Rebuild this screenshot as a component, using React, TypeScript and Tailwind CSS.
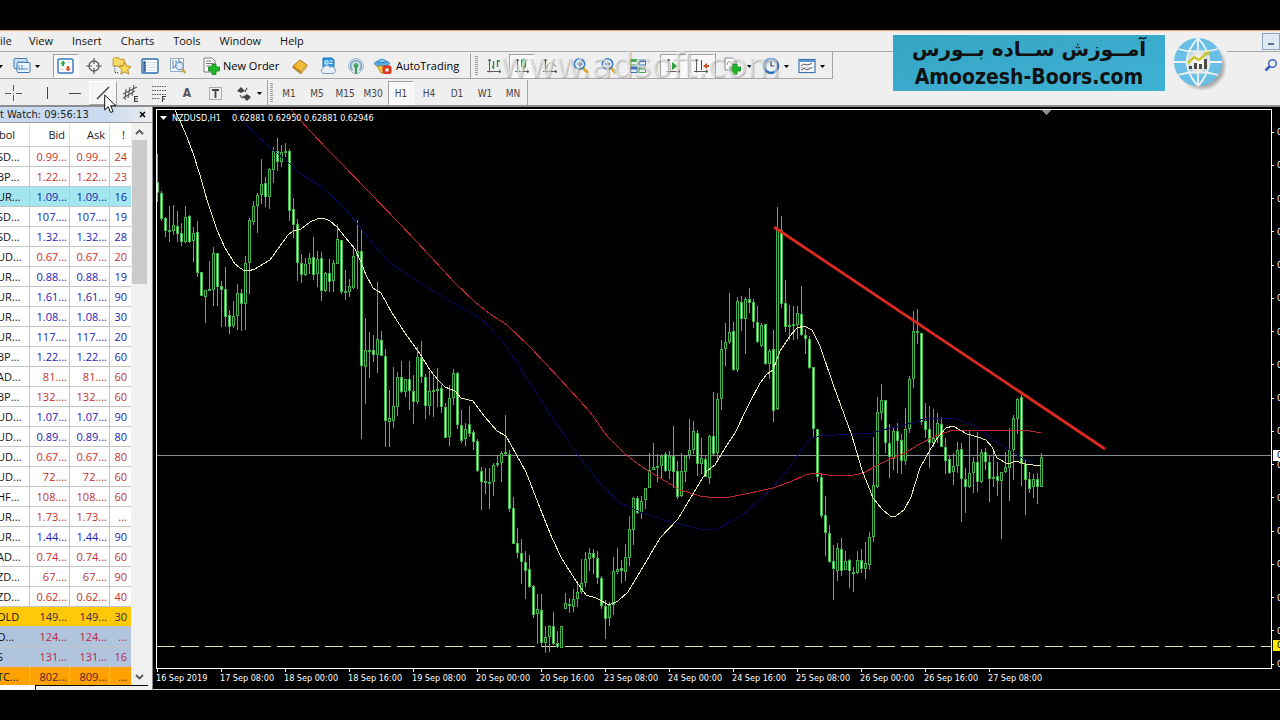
import type { ReactNode } from "react"
import clsx from "clsx"

/* ---------- Data ---------- */

type Tone = "up" | "down"
type Quote = { symbol: string; bid: string; ask: string; spread: string; tone: Tone; row?: string; text?: string }

const QUOTES: Quote[] = [
    { symbol: "SD...", bid: "0.99...", ask: "0.99...", spread: "24", tone: "down" },
    { symbol: "BP...", bid: "1.22...", ask: "1.22...", spread: "23", tone: "down" },
    { symbol: "UR...", bid: "1.09...", ask: "1.09...", spread: "16", tone: "up", row: "bg-[#a2e6f0]" },
    { symbol: "SD...", bid: "107....", ask: "107....", spread: "19", tone: "up" },
    { symbol: "SD...", bid: "1.32...", ask: "1.32...", spread: "28", tone: "up" },
    { symbol: "UD...", bid: "0.67...", ask: "0.67...", spread: "20", tone: "down" },
    { symbol: "UR...", bid: "0.88...", ask: "0.88...", spread: "19", tone: "up" },
    { symbol: "UR...", bid: "1.61...", ask: "1.61...", spread: "90", tone: "up" },
    { symbol: "UR...", bid: "1.08...", ask: "1.08...", spread: "30", tone: "up" },
    { symbol: "UR...", bid: "117....", ask: "117....", spread: "20", tone: "up" },
    { symbol: "BP...", bid: "1.22...", ask: "1.22...", spread: "60", tone: "up" },
    { symbol: "AD...", bid: "81....", ask: "81....", spread: "60", tone: "down" },
    { symbol: "BP...", bid: "132....", ask: "132....", spread: "60", tone: "down" },
    { symbol: "UD...", bid: "1.07...", ask: "1.07...", spread: "90", tone: "up" },
    { symbol: "UD...", bid: "0.89...", ask: "0.89...", spread: "80", tone: "up" },
    { symbol: "UD...", bid: "0.67...", ask: "0.67...", spread: "80", tone: "down" },
    { symbol: "UD...", bid: "72....", ask: "72....", spread: "60", tone: "down" },
    { symbol: "HF...", bid: "108....", ask: "108....", spread: "60", tone: "down" },
    { symbol: "UR...", bid: "1.73...", ask: "1.73...", spread: "...", tone: "down" },
    { symbol: "UR...", bid: "1.44...", ask: "1.44...", spread: "90", tone: "up" },
    { symbol: "AD...", bid: "0.74...", ask: "0.74...", spread: "60", tone: "down" },
    { symbol: "ZD...", bid: "67....", ask: "67....", spread: "90", tone: "down" },
    { symbol: "ZD...", bid: "0.62...", ask: "0.62...", spread: "40", tone: "down" },
    { symbol: "OLD", bid: "149...", ask: "149...", spread: "30", tone: "up", row: "bg-[#ffc90a]", text: "text-[#3a2848]" },
    { symbol: "O...", bid: "124...", ask: "124...", spread: "...", tone: "down", row: "bg-[#b0c4de]", text: "text-[#bb2447]" },
    { symbol: "S", bid: "131...", ask: "131...", spread: "16", tone: "down", row: "bg-[#b0c4de]", text: "text-[#bb2447]" },
    { symbol: "TC...", bid: "802...", ask: "809...", spread: "...", tone: "down", row: "bg-[#ffa200]", text: "text-[#5a2030]" },
]

// [high, body top, body bottom, low, falling]
type Candle = [number, number, number, number, 0 | 1]

const CANDLES: Candle[] = [
    [154, 182, 193, 202, 1], [191, 193, 219, 221, 1], [217, 218, 231, 237, 1], [206, 230, 232, 242, 0],
    [205, 225, 231, 235, 0], [211, 226, 234, 242, 1], [223, 233, 242, 246, 1], [206, 217, 242, 243, 0],
    [215, 216, 242, 243, 1], [227, 233, 241, 262, 0], [221, 232, 273, 277, 1], [272, 272, 296, 296, 1],
    [290, 290, 297, 323, 0], [261, 289, 291, 291, 0], [247, 253, 290, 306, 0], [253, 253, 287, 306, 1],
    [281, 286, 290, 327, 1], [267, 289, 317, 327, 1], [310, 315, 327, 334, 1], [301, 316, 326, 328, 0],
    [284, 293, 316, 330, 0], [289, 293, 304, 331, 1], [256, 263, 304, 330, 0], [218, 220, 263, 294, 0],
    [201, 206, 222, 225, 0], [193, 195, 206, 233, 0], [159, 184, 195, 204, 0], [177, 183, 197, 207, 1],
    [168, 169, 197, 209, 0], [147, 151, 170, 183, 0], [138, 151, 162, 171, 1], [145, 152, 162, 167, 0],
    [143, 151, 153, 157, 1], [149, 151, 211, 221, 1], [198, 209, 225, 238, 1], [219, 224, 263, 281, 1],
    [254, 263, 275, 283, 1], [258, 264, 275, 276, 0], [253, 258, 264, 274, 0], [237, 257, 275, 280, 1],
    [251, 259, 274, 287, 0], [252, 258, 291, 301, 1], [272, 273, 291, 292, 0], [259, 273, 282, 292, 1],
    [260, 263, 281, 292, 0], [224, 239, 264, 264, 0], [240, 240, 292, 294, 1], [270, 291, 293, 300, 0],
    [279, 286, 292, 297, 0], [246, 256, 288, 289, 0], [220, 251, 256, 289, 0], [230, 251, 366, 439, 1],
    [318, 350, 367, 404, 0], [332, 350, 352, 378, 0], [335, 350, 355, 362, 1], [282, 339, 355, 373, 0],
    [331, 340, 356, 356, 1], [349, 356, 421, 447, 1], [390, 418, 422, 447, 0], [367, 406, 421, 428, 0],
    [372, 377, 407, 416, 0], [361, 377, 392, 393, 1], [379, 379, 392, 397, 0], [361, 379, 391, 410, 1],
    [375, 391, 402, 424, 1], [347, 357, 402, 404, 0], [341, 357, 377, 383, 1], [374, 377, 406, 419, 1],
    [371, 391, 406, 415, 0], [374, 390, 392, 417, 0], [368, 389, 391, 407, 0], [385, 388, 407, 413, 1],
    [403, 407, 438, 438, 1], [385, 398, 437, 446, 0], [369, 373, 398, 405, 0], [372, 373, 425, 429, 1],
    [410, 425, 441, 443, 1], [423, 429, 439, 446, 0], [406, 424, 434, 437, 1], [430, 432, 442, 450, 1],
    [439, 441, 471, 472, 1], [467, 471, 482, 510, 1], [468, 481, 483, 494, 1], [468, 482, 484, 509, 0],
    [463, 465, 482, 496, 0], [455, 463, 465, 467, 0], [451, 453, 463, 482, 0], [415, 452, 454, 455, 1],
    [450, 454, 509, 512, 1], [497, 508, 544, 544, 1], [528, 543, 553, 558, 1], [539, 553, 562, 584, 1],
    [551, 562, 571, 599, 1], [555, 569, 587, 588, 1], [585, 586, 615, 618, 1], [594, 609, 614, 644, 0],
    [594, 610, 643, 647, 1], [626, 637, 643, 653, 0], [625, 626, 637, 652, 0], [612, 626, 644, 645, 1],
    [631, 643, 647, 648, 1], [626, 626, 648, 648, 0], [593, 603, 609, 609, 0], [598, 604, 606, 613, 1],
    [589, 599, 607, 612, 0], [581, 592, 599, 607, 0], [559, 583, 592, 594, 0], [552, 559, 583, 587, 0],
    [548, 553, 559, 571, 0], [549, 553, 558, 574, 1], [551, 558, 578, 584, 1], [576, 578, 606, 609, 1],
    [600, 606, 619, 639, 1], [602, 605, 618, 626, 0], [557, 571, 605, 615, 0], [548, 569, 572, 574, 0],
    [560, 568, 571, 583, 1], [544, 557, 572, 581, 0], [516, 529, 558, 566, 0], [497, 498, 530, 545, 0],
    [496, 498, 513, 514, 1], [496, 501, 513, 519, 0], [488, 488, 500, 509, 0], [453, 470, 488, 488, 0],
    [443, 467, 470, 470, 0], [454, 466, 468, 482, 0], [454, 456, 466, 479, 0], [452, 454, 471, 472, 1],
    [451, 456, 471, 479, 0], [426, 456, 472, 488, 1], [461, 471, 497, 499, 1], [453, 471, 496, 497, 0],
    [456, 456, 472, 482, 0], [419, 450, 455, 459, 0], [421, 431, 450, 454, 0], [430, 433, 464, 476, 1],
    [438, 458, 464, 474, 0], [455, 459, 477, 477, 1], [435, 436, 478, 484, 0], [392, 436, 454, 456, 1],
    [393, 399, 453, 460, 0], [340, 349, 399, 410, 0], [323, 342, 349, 366, 0], [293, 332, 342, 344, 0],
    [322, 331, 370, 371, 1], [297, 301, 370, 372, 0], [296, 302, 319, 331, 1], [297, 299, 319, 354, 0],
    [288, 299, 303, 313, 1], [299, 302, 322, 328, 1], [306, 322, 342, 343, 1], [323, 325, 346, 347, 0],
    [324, 324, 364, 365, 1], [349, 351, 364, 379, 0], [330, 349, 411, 422, 1], [207, 230, 409, 410, 0],
    [216, 230, 304, 308, 1], [280, 303, 327, 332, 1], [305, 325, 327, 340, 1], [306, 324, 326, 340, 0],
    [306, 313, 325, 339, 0], [286, 314, 335, 336, 1], [329, 335, 339, 354, 1], [336, 339, 368, 369, 1],
    [367, 367, 429, 438, 1], [429, 429, 477, 482, 1], [474, 477, 516, 518, 1], [496, 515, 533, 556, 1],
    [525, 533, 562, 563, 1], [545, 561, 569, 600, 1], [543, 548, 571, 581, 0], [538, 549, 571, 576, 1],
    [551, 561, 570, 570, 0], [559, 560, 571, 588, 1], [567, 572, 574, 592, 0], [551, 560, 573, 574, 0],
    [549, 560, 569, 573, 1], [542, 563, 569, 579, 0], [532, 537, 565, 570, 0], [437, 485, 537, 542, 0],
    [397, 412, 487, 488, 0], [384, 400, 413, 420, 0], [400, 400, 443, 453, 1], [424, 443, 457, 478, 1],
    [428, 431, 459, 470, 0], [423, 431, 441, 473, 1], [434, 440, 461, 474, 1], [408, 429, 461, 465, 0],
    [376, 379, 429, 433, 0], [311, 331, 379, 388, 0], [309, 331, 333, 344, 1], [333, 333, 422, 425, 1],
    [403, 421, 430, 438, 1], [406, 429, 443, 468, 1], [409, 438, 443, 447, 0], [413, 423, 438, 443, 0],
    [417, 424, 447, 447, 1], [438, 447, 461, 474, 1], [456, 459, 473, 474, 1], [453, 466, 472, 485, 0],
    [442, 450, 466, 473, 0], [443, 449, 479, 522, 1], [468, 479, 487, 513, 1], [431, 473, 487, 488, 0],
    [457, 462, 473, 493, 0], [432, 462, 482, 492, 1], [449, 452, 482, 483, 0], [448, 452, 462, 470, 1],
    [456, 462, 479, 502, 1], [452, 477, 479, 487, 0], [462, 476, 481, 496, 1], [472, 472, 481, 539, 0],
    [452, 467, 472, 473, 0], [428, 450, 468, 501, 0], [415, 418, 450, 480, 0], [398, 399, 419, 434, 0],
    [391, 397, 464, 486, 1], [460, 464, 480, 515, 1], [472, 479, 489, 493, 1], [474, 479, 487, 498, 0],
    [473, 479, 487, 504, 1], [453, 457, 487, 487, 0],
]

const MA_FAST =
    "175,110 185,132 193,153 200,175 207,200 217,230 225,248 235,264 243,270 248,271 255,269 263,264 270,260 280,246 288,235 293,231 301,229 310,222 317,219 323,218 330,221 337,227 345,237 355,249 361,262 366,275 373,288 381,293 392,313 405,333 420,354 430,370 438,380 445,387 455,391 461,398 473,401 485,417 497,431 506,436 516,454 526,472 540,508 552,538 562,559 576,581 586,595 596,598 609,605 618,601 628,592 640,572 660,538 678,519 690,499 700,482 707,471 715,465 725,448 735,433 748,406 760,383 767,374 773,370 780,351 790,336 797,328 804,326 812,330 820,346 833,384 852,436 862,470 873,498 882,509 890,516 896,516 904,510 911,497 920,468 930,450 938,437 946,428 953,426 960,430 967,434 978,437 986,440 992,447 997,458 1008,464 1016,461 1025,464 1041,466"
const MA_SLOW =
    "291,110 310,131 328,150 340,162 368,191 400,224 430,256 455,283 475,302 490,314 507,325 530,347 560,379 590,412 607,436 625,454 645,469 665,481 680,490 700,496 715,498 730,497 750,493 773,488 790,482 805,475 815,473 828,475 850,476 863,473 878,465 890,459 905,453 918,445 935,436 950,431 965,430 1025,430 1041,433"
const MA_MID =
    "235,110 242,120 258,137 272,149 288,162 298,172 322,187 345,209 357,223 368,238 388,261 415,280 450,301 480,318 490,327 507,347 523,372 547,410 577,454 603,487 620,503 640,512 667,521 700,529 715,530 740,517 757,502 773,487 787,470 800,452 810,439 820,436 853,434 873,433 890,428 913,423 923,419 953,418 967,423 980,428 993,440 1010,450 1020,457 1033,463"

const TIMES = [
    "16 Sep 2019", "17 Sep 08:00", "18 Sep 00:00", "18 Sep 16:00", "19 Sep 08:00", "20 Sep 00:00", "20 Sep 16:00",
    "23 Sep 08:00", "24 Sep 00:00", "24 Sep 16:00", "25 Sep 08:00", "26 Sep 00:00", "26 Sep 16:00", "27 Sep 08:00",
]

const MENU = ["View", "Insert", "Charts", "Tools", "Window", "Help"]
const FRAMES = ["M1", "M5", "M15", "M30", "H1", "H4", "D1", "W1", "MN"]

const UI = "font-['Open_Sans','Noto_Sans',sans-serif]"
const TAHOMA = "font-['DejaVu_Sans_Condensed','DejaVu_Sans',sans-serif]"

/* ---------- Toolbar parts ---------- */

function Glyph({ children, size = 18 }: { children: ReactNode; size?: number }) {
    return (
        <svg width={size} height={size} viewBox="0 0 18 18" fill="none" className="shrink-0" aria-hidden="true">
            {children}
        </svg>
    )
}

function Tool({ label, width = "w-7", pressed, children }: { label: string; width?: string; pressed?: boolean; children: ReactNode }) {
    return (
        <button type="button" aria-label={label} className={clsx("flex h-6 shrink-0 items-center justify-center", width)}>
            {pressed ? (
                <span className="flex h-6 w-[26px] items-center justify-center border border-r-white border-b-white border-t-[#a0a0a0] border-l-[#a0a0a0] bg-[#f8f8f8]">
                    {children}
                </span>
            ) : (
                children
            )}
        </button>
    )
}

function Separator() {
    return <span className="h-[26px] w-px shrink-0 bg-[#a4a4a4]" />
}

function Grip() {
    return (
        <svg width="3" height="20" className="shrink-0" aria-hidden="true">
            {Array.from({ length: 10 }, (_, i) => (
                <rect key={i} y={i * 2} width="3" height="1" fill="#9a9a9a" />
            ))}
        </svg>
    )
}

function Caret() {
    return (
        <svg width="5" height="3" viewBox="0 0 5 3" className="shrink-0" aria-hidden="true">
            <path d="M0 0h5L2.5 3z" fill="#000" />
        </svg>
    )
}

function Crosshair() {
    return (
        <Glyph>
            <circle cx="9" cy="9" r="5" stroke="#606060" strokeWidth="1.4" />
            <path d="M9 1v6M9 11v6M1 9h6M11 9h6" stroke="#606060" strokeWidth="1.2" />
        </Glyph>
    )
}

function Magnifier({ minus }: { minus?: boolean }) {
    return (
        <Glyph>
            <path d="M11 11l5 5" stroke="#d8a92c" strokeWidth="3" />
            <circle cx="7.5" cy="7" r="5.2" fill="#dceefb" stroke="#3a7cc4" strokeWidth="1.6" />
            <path d={minus ? "M5 7h5" : "M5 7h5M7.5 4.5v5"} stroke="#2d6ab4" strokeWidth="1.5" />
        </Glyph>
    )
}

function Axes({ children }: { children: ReactNode }) {
    return (
        <Glyph>
            <path d="M4.5 2v13.5M2 14.5h14M3 4l1.5-2L6 4M14 13l2 1.5-2 1.5" stroke="#5a5a5a" />
            {children}
        </Glyph>
    )
}

function MainToolbar() {
    return (
        <div className="flex h-[27px] w-[833px] items-center overflow-hidden border-r border-b border-[#a4a4a4] pt-0.5">
            <span className="flex w-[5px] justify-end"><span className="mr-0.5"><Caret /></span></span>
            <Tool label="New chart" width="w-[43px]">
                <span className="flex items-center gap-1">
                    <Glyph>
                        <rect x="1" y="1.5" width="13" height="10" rx="1" fill="#cfe3f6" stroke="#3c78b4" />
                        <rect x="4" y="5.5" width="13" height="10" rx="1" fill="#eaf4fd" stroke="#3c78b4" />
                        <path d="M4 5h8M6 8v5M6 12h9M9 8v5" stroke="#5b93c8" />
                    </Glyph>
                    <Caret />
                </span>
            </Tool>
            <span className="pl-0.5"><Separator /></span>
            <span className="w-0.5 shrink-0" />
            <Tool label="Market Watch" pressed>
                <Glyph>
                    <rect x="1" y="2" width="15" height="14" rx="1" fill="#fff" stroke="#3578bd" strokeWidth="1.4" />
                    <path d="M6 3.500l2.800 3H7.200v2.500H4.800V6.500H3.200z" fill="#2fa84a" />
                    <path d="M11 14.500l-2.800-3h1.600V9h2.400v2.500h1.600z" fill="#e0562c" />
                    <path d="M10.500 5.500h3M3.500 12.500h3" stroke="#b9cfe4" />
                </Glyph>
            </Tool>
            <Tool label="Crosshair"><Crosshair /></Tool>
            <Tool label="Navigator">
                <Glyph size={20}>
                    <path d="M1 2.500l1-1h4l1 1.500h4v6H1z" fill="#f8d867" stroke="#b88c22" strokeWidth=".8" />
                    <path d="M2.500 9v6M2.500 15h4" stroke="#444" strokeDasharray="1 1" />
                    <path d="M11.500 5.500l1.700 3.600 3.900.5-2.900 2.700.8 4-3.500-2-3.500 2 .8-4L6 9.600l3.900-.5z" fill="#fbdc55" stroke="#ae8420" strokeWidth=".8" />
                </Glyph>
            </Tool>
            <Tool label="Terminal">
                <Glyph>
                    <rect x="1" y="2" width="16" height="14" rx="1" fill="#fff" stroke="#2e6db1" strokeWidth="1.4" />
                    <path d="M2 4h3v11H2z" fill="#5490cc" />
                    <path d="M6 5.500h10M6 8h10M6 10.500h10M6 13h10" stroke="#c3d6ea" strokeWidth=".8" />
                    <path d="M3 6h1M3 8.500h1M3 11h1M3 13h1" stroke="#0e2f5a" />
                </Glyph>
            </Tool>
            <Tool label="Strategy Tester">
                <Glyph>
                    <path d="M1.500 1.500h13v13h-13z" fill="#fff" stroke="#8eabc8" />
                    <path d="M4 3v9M7 3v7M4 10h3M10 2v5M12 4v4" stroke="#4f7fb0" />
                    <circle cx="10.500" cy="9" r="3.800" fill="#d6e8f7" fillOpacity=".85" stroke="#6592c4" strokeWidth="1.200" />
                    <path d="M13 12l3.500 4" stroke="#d8a437" strokeWidth="2.400" />
                </Glyph>
            </Tool>
            <span className="pl-0.5"><Separator /></span>
            <button type="button" className="flex h-6 w-[92px] shrink-0 items-center gap-[3px] pl-2 text-[11px] text-black">
                <Glyph>
                    <path d="M2 1h8l3 3v11H2z" fill="#fff" stroke="#777" />
                    <path d="M4 4h5M4 6.500h7M4 9h5" stroke="#777" />
                    <path d="M10 7h4v3h3.500v4H14v3.500h-4V14H6.500v-4H10z" fill="#20b52a" stroke="#0c7d18" strokeWidth=".8" />
                </Glyph>
                <span className="whitespace-nowrap">New Order</span>
            </button>
            <Tool label="MetaEditor">
                <Glyph>
                    <path d="M2 9l7-6 7 5-6 7z" fill="#f2bc38" stroke="#a97816" />
                    <path d="M2 9v2l8 6v-2z" fill="#c98f1b" stroke="#a97816" strokeWidth=".6" />
                    <path d="M16 8v2l-6 7v-2z" fill="#fbe5a0" stroke="#a97816" strokeWidth=".6" />
                </Glyph>
            </Tool>
            <Tool label="Cloud">
                <Glyph>
                    <path d="M4 1h9l2 2v7H4z" fill="#2d9be6" stroke="#1b6fb4" />
                    <path d="M6 4h3v3H6zM10.500 4h3M10.500 6.500h3" stroke="#fff" />
                    <path d="M4 16.500a3 3 0 0 1 0-5.500 4 4 0 0 1 7-1 3.500 3.500 0 0 1 3.500 6.500z" fill="#e6edf8" stroke="#7f96bd" />
                </Glyph>
            </Tool>
            <Tool label="Signals">
                <Glyph>
                    <circle cx="9" cy="9" r="7.500" fill="#d5e4e8" stroke="#9fb8c8" />
                    <path d="M5.500 13a5.300 5.300 0 1 1 7 0" stroke="#6694b4" strokeWidth="1.300" />
                    <circle cx="9" cy="8.500" r="2.500" fill="#52a866" />
                    <path d="M9 9v8" stroke="#3c9a50" strokeWidth="2" />
                </Glyph>
            </Tool>
            <button type="button" className="flex h-6 w-[100px] shrink-0 items-center gap-1 pl-1 text-[11px] text-black">
                <Glyph>
                    <ellipse cx="8" cy="6.500" rx="7.500" ry="3" fill="#55aee6" stroke="#2a74aa" strokeWidth=".8" />
                    <path d="M4 5.500C4 1 12 1 12 5.500z" fill="#7cc6f2" stroke="#2a74aa" strokeWidth=".8" />
                    <path d="M3 9h10l-3 7H7z" fill="#f1c34b" stroke="#a9801e" strokeWidth=".8" />
                    <rect x="8.500" y="8.500" width="9" height="8.500" rx="2" fill="#d63b20" />
                    <rect x="11.500" y="11.500" width="3" height="3" fill="#fff" />
                </Glyph>
                <span className="whitespace-nowrap">AutoTrading</span>
            </button>
            <Separator />
            <span className="w-1 shrink-0" />
            <Grip />
            <span className="w-0.5 shrink-0" />
            <Tool label="Bar chart"><Axes><path d="M8.500 4v8M7 10h2M12.500 3v7M12 4h3" stroke="#2a8a3a" strokeWidth="1.300" /></Axes></Tool>
            <Tool label="Candlesticks" pressed>
                <Axes>
                    <path d="M10.500 1v12" stroke="#2a8a3a" />
                    <rect x="8.500" y="3" width="4" height="7" fill="#6ed07c" stroke="#2a8a3a" />
                </Axes>
            </Tool>
            <Tool label="Line chart"><Axes><path d="M5 12c3-8 6-8 10-2" stroke="#6a9a72" /></Axes></Tool>
            <span className="pl-[3px]"><Separator /></span>
            <Tool label="Zoom in"><Magnifier /></Tool>
            <Tool label="Zoom out"><Magnifier minus /></Tool>
            <Tool label="Tile windows" width="w-[30px]">
                <Glyph>
                    <rect x="1" y="2" width="7.500" height="6.500" fill="#4aa84e" />
                    <rect x="9.500" y="2" width="7.500" height="6.500" fill="#3b6fc0" />
                    <rect x="1" y="9.500" width="7.500" height="6.500" fill="#3b6fc0" />
                    <rect x="9.500" y="9.500" width="7.500" height="6.500" fill="#4aa84e" />
                    <path d="M2 5h5.500v2.500H2zM10.500 5H16v2.500h-5.500zM2 12.500h5.500V15H2zM10.500 12.500H16V15h-5.500z" fill="#e8f1f8" />
                </Glyph>
            </Tool>
            <span className="pl-[3px]"><Separator /></span>
            <span className="w-[3px] shrink-0" />
            <Tool label="Auto scroll" pressed><Axes><path d="M8 5l6 4-6 4z" fill="#36a344" /></Axes></Tool>
            <Tool label="Chart shift" pressed><Axes><path d="M9.500 3v10" stroke="#446" /><path d="M11 9l4-3v2h2v2h-2v2z" fill="#c8502c" /></Axes></Tool>
            <Separator />
            <Tool label="Indicators" width="w-[43px]">
                <span className="flex items-center gap-1.5">
                    <Glyph>
                        <path d="M2 1h8l3 3v9H2z" fill="#fff" stroke="#888" />
                        <path d="M4 8c1-5 3-4 4-1" stroke="#777" />
                        <path d="M10 7h4v3h3.500v4H14v3.500h-4V14H6.500v-4H10z" fill="#20b52a" stroke="#0c7d18" strokeWidth=".8" />
                    </Glyph>
                    <Caret />
                </span>
            </Tool>
            <Tool label="Periods" width="w-[33px]">
                <span className="flex items-center gap-1">
                    <Glyph>
                        <circle cx="9" cy="9" r="7" fill="#e8f2fb" stroke="#2d6cb5" strokeWidth="2.600" />
                        <path d="M9 4.500V9h3.500" stroke="#444" strokeWidth="1.200" />
                    </Glyph>
                    <Caret />
                </span>
            </Tool>
            <Tool label="Templates" width="w-[38px]">
                <span className="flex items-center gap-1">
                    <Glyph>
                        <rect x="1" y="2.500" width="16" height="13" fill="#fff" stroke="#3d74ac" strokeWidth="1.200" />
                        <path d="M1 4h16" stroke="#5b95cf" strokeWidth="2" />
                        <path d="M3 9l3-2 3 1 5-1.500M3 13l3-1.500 3 1.500 5-2.500" stroke="#555" />
                        <path d="M2 10.500h14" stroke="#9ab" strokeWidth=".6" />
                    </Glyph>
                    <Caret />
                </span>
            </Tool>
        </div>
    )
}

function DrawingToolbar() {
    return (
        <div className="flex h-[26px] items-center overflow-hidden pt-0.5">
            <Tool label="Cross" width="w-[26px]">
                <Glyph><path d="M9.500 1v6M9.500 11v6M1 9.500h6M12 9.500h6M9 9.500h1" stroke="#555" /></Glyph>
            </Tool>
            <span className="pl-1"><Separator /></span>
            <span className="w-[3px] shrink-0" />
            <Tool label="Vertical line"><Glyph><path d="M9.500 3v12" stroke="#444" /></Glyph></Tool>
            <Tool label="Horizontal line"><Glyph><path d="M3 9.500h12" stroke="#444" /></Glyph></Tool>
            <button type="button" aria-label="Trendline" className="flex h-6 w-7 shrink-0 items-center justify-center border border-white border-r-[#a0a0a0] border-b-[#a0a0a0] bg-[#f6f6f6]">
                <Glyph><path d="M3 15L15 3" stroke="#444" strokeWidth="1.400" /></Glyph>
            </button>
            <Tool label="Equidistant channel">
                <Glyph>
                    <path d="M1 10L15 3M1 14L13 7M4 5l-1 11M8 3L6 14M12 1l-2 11" stroke="#555" strokeWidth="1.100" />
                    <path d="M12.500 12v5.500M12 12.500h4M12 14.900h3.500M12 17.400h4" stroke="#333" />
                </Glyph>
            </Tool>
            <Tool label="Fibonacci">
                <Glyph>
                    <path d="M2 2.500h14M2 6.500h14M2 10.500h14M2 14.500h8" stroke="#555" strokeDasharray="1.500 1" />
                    <path d="M12.500 12v6M12 12.500h4M12 15h3" stroke="#333" />
                </Glyph>
            </Tool>
            <Tool label="Text"><span className={clsx("text-[12px] font-bold text-[#555]", TAHOMA)}>A</span></Tool>
            <Tool label="Text label">
                <Glyph>
                    <rect x="3.500" y="3.500" width="12" height="12" stroke="#666" strokeDasharray="1 1" />
                    <path d="M6 6h7M9.500 6v8" stroke="#444" strokeWidth="1.800" />
                </Glyph>
            </Tool>
            <Tool label="Arrows" width="w-[38px]">
                <span className="flex items-center gap-1">
                    <Glyph>
                        <path d="M6 3l4 4-4 2-4-2zM12 10l4 3-4 4-4-4z" fill="#444" />
                        <path d="M12 4l-2 4M5 11l2 3M7 14l2-2" stroke="#555" strokeWidth="1.200" />
                    </Glyph>
                    <Caret />
                </span>
            </Tool>
            <Separator />
            <span className="w-0.5 shrink-0" />
            <Grip />
            <span className="w-0.5 shrink-0" />
            {FRAMES.map((f) => (
                <Tool key={f} label={f} pressed={f === "H1"}>
                    <span className={clsx("text-[10px] text-[#444]", TAHOMA)}>{f}</span>
                </Tool>
            ))}
            <Separator />
        </div>
    )
}

/* ---------- Overlays ---------- */

function Banner() {
    return (
        <div className="absolute top-1 right-[53px] flex h-14 items-center gap-1.5 bg-[#efefef]">
            <div className="flex h-14 w-[272px] flex-col items-center justify-center bg-linear-to-br from-[#35a4c4] to-[#3fb2d4] text-[#111]">
                <div lang="fa" dir="rtl" className="h-7 font-['DejaVu_Sans'] text-[20px] leading-6 font-bold whitespace-nowrap">
                    آمــوزش ســاده بــورس
                </div>
                <div className={clsx("h-6 text-[21px] leading-6 font-bold whitespace-nowrap", TAHOMA)}>Amoozesh-Boors.com</div>
            </div>
            <svg width="56" height="56" viewBox="0 0 56 56" aria-hidden="true">
                <defs>
                    <radialGradient id="core">
                        <stop offset="0" stopColor="#fff" />
                        <stop offset="0.600" stopColor="#e8e8e4" />
                        <stop offset="1" stopColor="#e8e8e4" stopOpacity="0" />
                    </radialGradient>
                    <radialGradient id="shade">
                        <stop offset="0.800" stopColor="#a8a8a8" />
                        <stop offset="1" stopColor="#efefef" />
                    </radialGradient>
                </defs>
                <circle cx="31" cy="31" r="25" fill="url(#shade)" />
                <circle cx="27" cy="27" r="24" fill="#69bfe6" />
                <path d="M3 27h48M7 14q20 6 40 0M7 40q20-6 40 0M27 3v48M27 3Q5 27 27 51M27 3q22 24 0 48" fill="none" stroke="#f2f2f2" strokeWidth="1.800" />
                <circle cx="27" cy="27" r="14" fill="url(#core)" />
                <path d="M18 31h3v3h-3zM23 28h3v6h-3zM28 29h3v5h-3zM33 24h3v10h-3z" fill="#4a4a4a" />
                <path d="M17 28l6-6 5 3 8-7" fill="none" stroke="#c9c92e" strokeWidth="2.500" />
                <path d="M33 17l6-1-2 5z" fill="#c9c92e" />
            </svg>
        </div>
    )
}

function Cursor() {
    return (
        <svg width="13" height="20" viewBox="0 0 13 20" className="absolute top-[63px] left-[104px] z-10" aria-hidden="true">
            <path d="M.7 1v15l3.500-3.300 2.400 5.800 2.500-1-2.400-5.700h5z" fill="#fff" stroke="#111" />
        </svg>
    )
}

/* ---------- Market watch ---------- */

function MarketWatch() {
    return (
        <aside className="flex h-[583px] w-[153px] shrink-0 flex-col border-r border-[#8c8c8c] bg-[#f0f0f0]">
            <div className="flex h-4 items-center justify-between border-b border-[#9a9a9a] bg-linear-to-r from-[#c9daf0] from-70% to-[#eeeeee] pr-1">
                <div className={clsx("text-[11px] leading-[15px] whitespace-nowrap text-[#222]", TAHOMA)}>t Watch: 09:56:13</div>
                <button type="button" aria-label="Close" className="p-0.5">
                    <svg width="7" height="7" viewBox="0 0 7 7"><path d="M1 1l5 5M6 1L1 6" stroke="#000" strokeWidth="1.500" /></svg>
                </button>
            </div>
            <div className="flex h-[562px] overflow-hidden">
                <div className="w-[131px] shrink-0 bg-white">
                    <table className={clsx("w-[131px] table-fixed border-separate border-spacing-0 text-[11px] leading-[19px]", UI)}>
                        <colgroup>
                            <col className="w-[30px]" />
                            <col className="w-10" />
                            <col className="w-10" />
                            <col />
                        </colgroup>
                        <thead>
                            <tr className="h-6 text-right text-[#222]">
                                <th className="border-r border-b border-[#dcdcdc] border-b-[#c4c4c4] p-0 text-left font-normal">
                                    <span className="-ml-px">bol</span>
                                </th>
                                <th className="border-r border-b border-[#dcdcdc] border-b-[#c4c4c4] p-0 pr-1 font-normal">Bid</th>
                                <th className="border-r border-b border-[#dcdcdc] border-b-[#c4c4c4] p-0 pr-1 font-normal">Ask</th>
                                <th className="border-b border-[#c4c4c4] p-0 pr-1.5 font-normal">!</th>
                            </tr>
                        </thead>
                        <tbody>
                            {QUOTES.map((q, i) => (
                                <tr key={i} className={clsx("h-5 text-right", q.row, q.text ?? (q.tone === "up" ? "text-[#1c1cb4]" : "text-[#c2322e]"))}>
                                    <td className="border-r border-b border-[#c4c4c4] p-0 text-left whitespace-nowrap text-[#111]">
                                        <span className="-ml-[3px]">{q.symbol}</span>
                                    </td>
                                    <td className="border-r border-b border-[#c4c4c4] p-0 pr-0.5">{q.bid}</td>
                                    <td className="border-r border-b border-[#c4c4c4] p-0 pr-0.5">{q.ask}</td>
                                    <td className="border-b border-[#c4c4c4] p-0 pr-1">{q.spread}</td>
                                </tr>
                            ))}
                        </tbody>
                    </table>
                </div>
                <div className="ml-px flex w-[15px] flex-col items-center justify-between bg-[#f0f0f0]">
                    <div className="flex w-full flex-col items-center">
                        <span className="flex h-[17px] items-center">
                            <svg width="9" height="6" viewBox="0 0 9 6"><path d="M1 5l3.500-3.500L8 5" fill="none" stroke="#555" strokeWidth="1.800" /></svg>
                        </span>
                        <span className="h-36 w-full bg-[#cbcbcb]" />
                    </div>
                    <span className="flex h-[17px] items-center">
                        <svg width="9" height="6" viewBox="0 0 9 6"><path d="M1 1l3.500 3.500L8 1" fill="none" stroke="#555" strokeWidth="1.800" /></svg>
                    </span>
                </div>
            </div>
            <div className="flex flex-1">
                <div className="w-[35px] bg-white" />
                <div className="w-[113px] border-t border-l border-black" />
            </div>
        </aside>
    )
}

/* ---------- Chart ---------- */

function PriceChart() {
    return (
        <svg viewBox="157 110 1114 558" className="block w-full" shapeRendering="crispEdges" role="img" aria-label="NZDUSD H1">
            <rect x="157" y="455" width="1114" height="1" fill="#8a8c96" />
            <path d="M157 646.5H1271" stroke="#deddA8" strokeDasharray="18 6" />
            {CANDLES.map(([high, top, bottom, low, falling], i) => {
                const x = 157 + i * 4
                return (
                    <g key={i}>
                        <rect x={x} y={high} width="1" height={Math.max(low - high, 1)} fill="#4cb853" />
                        <rect x={x - 1} y={top} width="3" height={Math.max(bottom - top, 1)} fill="#41b44a" />
                        <rect x={x} y={top + 1} width="1" height={Math.max(bottom - top - 2, 0)} fill={falling ? "#b0ffb0" : "#000"} />
                    </g>
                )
            })}
            <polyline points={MA_MID} fill="none" stroke="#08085c" />
            <polyline points={MA_SLOW} fill="none" stroke="#c4242e" />
            <polyline points={MA_FAST} fill="none" stroke="#eaeaae" />
            <path d="M774 227L1105 449" stroke="#dc2a20" strokeWidth="2.800" shapeRendering="auto" />
            <path d="M1041 110h11l-5.500 5z" fill="#8c8c8c" />
        </svg>
    )
}

function ChartWindow() {
    return (
        <main className={clsx("flex min-w-0 flex-1 flex-col border-b border-[#d8d8d8] bg-black pt-0.5 pl-[3px] text-[9px] text-white", TAHOMA)}>
            <div className="flex">
                <div className="relative min-w-0 flex-1 border border-white">
                    <PriceChart />
                    <div className="absolute top-[2px] left-[3px] flex items-center gap-[5px] leading-3">
                        <svg width="7" height="4" viewBox="0 0 7 4"><path d="M0 0h7L3.500 4z" fill="#fff" /></svg>
                        <span className="w-[55px]">NZDUSD,H1</span>
                        <span className="whitespace-nowrap">0.62881 0.62950 0.62881 0.62946</span>
                    </div>
                </div>
                <div className="relative w-2 shrink-0 overflow-hidden">
                    <div className="flex h-full flex-col justify-between pt-[18px]">
                        {Array.from({ length: 17 }, (_, i) => (
                            <div key={i} className="flex h-[10px] items-center gap-[3px] leading-[10px]">
                                <span className="h-px w-0.5 shrink-0 bg-white" />
                                <span>0</span>
                            </div>
                        ))}
                    </div>
                    <span className="absolute top-[341px] left-px w-4 bg-white pl-1 leading-[11px] text-black">0</span>
                    <span className="absolute top-[531px] left-px w-4 bg-[#ffe800] pl-1 leading-[11px] text-black">0</span>
                </div>
            </div>
            <div className="flex overflow-hidden pl-px">
                {TIMES.map((t) => (
                    <div key={t} className="w-16 shrink-0 whitespace-nowrap">
                        <div className="h-[3px] w-px bg-white" />
                        <div className="-ml-px leading-3">{t}</div>
                    </div>
                ))}
            </div>
        </main>
    )
}

export default function App() {
    return (
        <div className={clsx("min-h-screen overflow-hidden bg-black pt-[30px]", UI)}>
            <header className="relative border-t border-b-2 border-t-[#d9a066] border-b-[#8e8e8e] bg-[#efefef]">
                <nav className="flex h-[21px] items-center border-b border-[#a8a8a8] text-[11px] text-[#111]">
                    <button type="button" className="w-[29px] text-left">ile</button>
                    <div className="flex gap-[19px]">
                        {MENU.map((m) => (
                            <button key={m} type="button">{m}</button>
                        ))}
                    </div>
                </nav>
                <MainToolbar />
                <DrawingToolbar />
                <div className="pointer-events-none absolute top-[14px] left-[500px] font-['DejaVu_Sans'] text-[34px] leading-10 whitespace-nowrap text-white/50 [text-shadow:1px_1px_1px_rgba(110,110,110,0.45)]">
                    www.adsoft.com
                </div>
                <Banner />
                <button type="button" aria-label="Minimize" className="absolute top-[2px] right-0 flex h-[17px] w-[18px] items-end justify-center border border-[#8ea2bc] bg-[#dfe9f5] pb-1">
                    <span className="h-0.5 w-1.5 bg-[#5a7090]" />
                </button>
                <button type="button" aria-label="Search" className="absolute top-[27px] right-[2px]">
                    <svg width="14" height="14" viewBox="0 0 14 14" fill="none">
                        <path d="M6 8l-4.500 4.500" stroke="#3a62b8" strokeWidth="2.600" />
                        <circle cx="8.500" cy="5.500" r="3.800" stroke="#3a62b8" strokeWidth="1.400" />
                    </svg>
                </button>
                <Cursor />
            </header>
            <div className="flex">
                <MarketWatch />
                <ChartWindow />
            </div>
        </div>
    )
}
